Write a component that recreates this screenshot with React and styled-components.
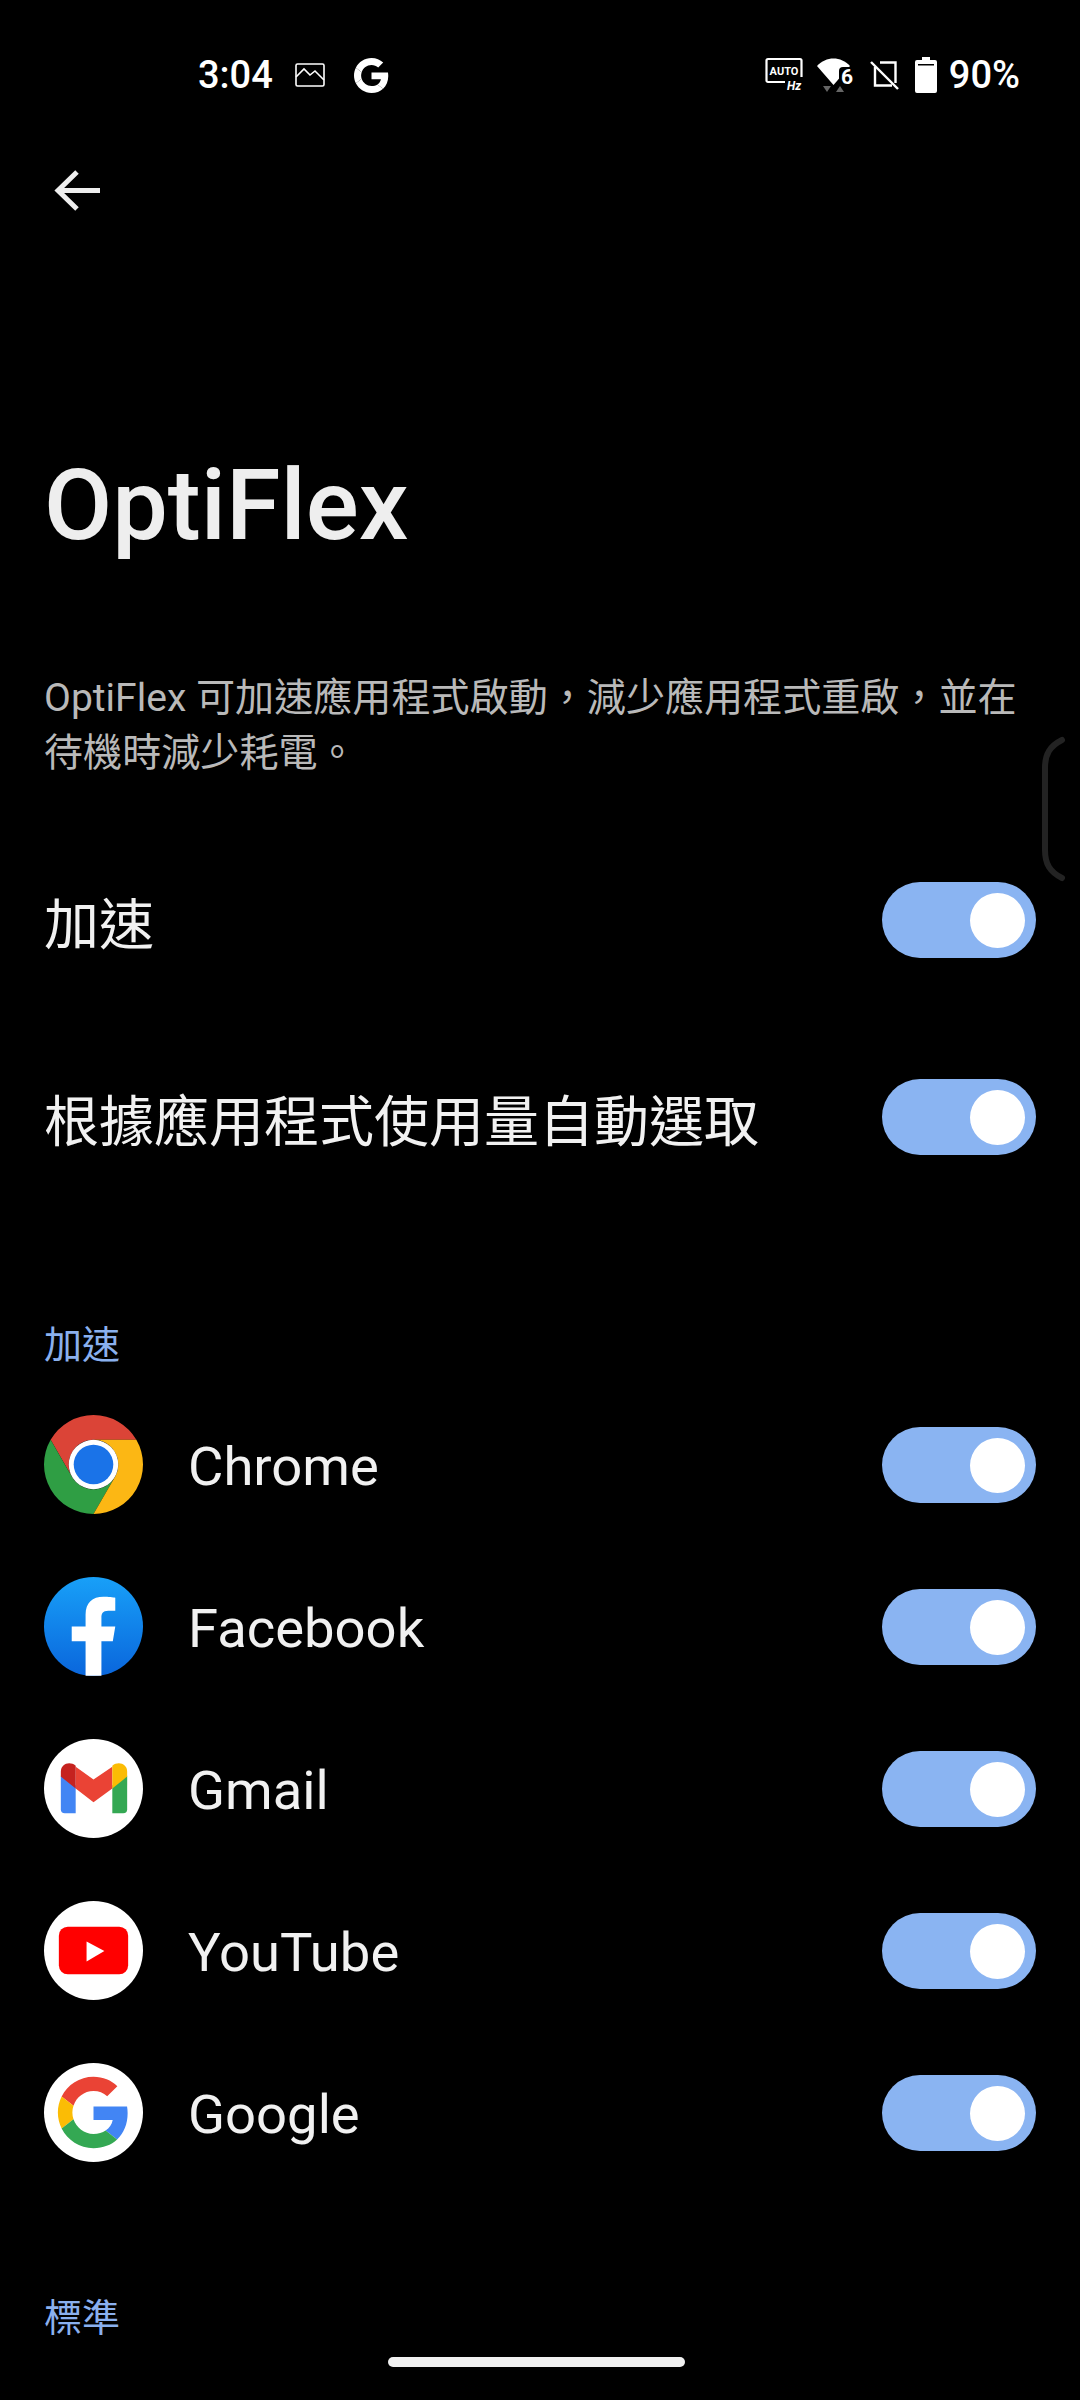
import React from "react";
import styled, { createGlobalStyle } from "styled-components";

const GlobalStyle = createGlobalStyle`
    html, body {
        margin: 0;
        padding: 0;
        background: #000;
    }
    body {
        font-family: Roboto, "Noto Sans CJK TC", sans-serif;
    }
`

const Screen = styled.div`
    position: relative;
    width: 1080px;
    height: 2400px;
    overflow: hidden;
    background: #000;
    color: #f1f1f1;
`

const StatusBar = styled.div`
    display: flex;
    align-items: center;
    justify-content: space-between;
    height: 150px;
    padding: 0 60px 0 198px;
    color: #fff;
`

const StatusGroup = styled.div`
    display: flex;
    align-items: center;
    gap: ${props => props.gap || 20}px;
`

const StatusText = styled.span`
    font-size: 38px;
    font-weight: 500;
    line-height: 1;
`

const Toolbar = styled.div`
    display: flex;
    align-items: center;
    height: 82px;
    padding-left: 54px;
`

const Title = styled.h1`
    margin: 218px 0 0;
    padding-left: 44px;
    font-size: 99px;
    font-weight: 500;
    line-height: 110px;
    color: #eee;
`

const Description = styled.p`
    margin: 111px 0 0;
    padding: 0 40px 0 44px;
    font-size: 39.1px;
    font-weight: 400;
    line-height: 55px;
    color: #b9b9b9;
`

const SettingRow = styled.div`
    display: flex;
    align-items: center;
    justify-content: space-between;
    height: 197px;
    padding: 0 44px;
    font-size: 55px;
    color: #f1f1f1;
`

const SettingList = styled.div`
    margin-top: 40px;
`

const SectionLabel = styled.div`
    margin-top: ${props => props.top}px;
    padding-left: 44px;
    font-size: 38px;
    line-height: 50px;
    color: #8ab0ee;
`

const AppList = styled.div`
    margin-top: 45px;
    display: flex;
    flex-direction: column;
    gap: 63px;
`

const AppRow = styled.div`
    display: flex;
    align-items: center;
    height: 99px;
    padding: 0 44px;
`

const AppIcon = styled.svg`
    width: 99px;
    height: 99px;
    flex: none;
`

const AppName = styled.div`
    flex: 1;
    margin-left: 45px;
    padding-top: 3px;
    font-size: 54.4px;
    color: #f1f1f1;
`

const Toggle = styled.div`
    position: relative;
    flex: none;
    width: 154px;
    height: 76px;
    border-radius: 38px;
    background: #8ab4f2;

    &::after {
        content: "";
        position: absolute;
        top: 11px;
        right: 11px;
        width: 55px;
        height: 55px;
        border-radius: 50%;
        background: #fff;
    }
`

const HomeBar = styled.div`
    position: absolute;
    left: 388px;
    top: 2357px;
    width: 297px;
    height: 10px;
    border-radius: 5px;
    background: #f1f1f1;
`

const EdgeHandle = styled.svg`
    position: absolute;
    left: 1036px;
    top: 732px;
    width: 44px;
    height: 154px;
`

const BackArrow = () => (
    <svg width="46" height="42" viewBox="0 0 46 42" fill="none" stroke="#eee" strokeWidth="5">
        <path d="M46 20.5H4M23 2 4 20.5 23 39" />
    </svg>
)

const PictureIcon = () => (
    <svg width="30" height="24" viewBox="0 0 30 24" fill="none" stroke="#fff" strokeWidth="1.6">
        <rect x="1" y="1" width="28" height="22" rx="1.5" />
        <path d="M1 14 9 6l6 6 5-4 9 9" />
    </svg>
)

const GooglePaths = ({ red, blue, yellow, green }) => (
    <>
        <path fill={red} d="M24 9.5c3.54 0 6.71 1.22 9.21 3.6l6.85-6.85C35.9 2.38 30.47 0 24 0 14.62 0 6.51 5.38 2.56 13.22l7.98 6.19C12.43 13.72 17.74 9.5 24 9.5z" />
        <path fill={blue} d="M46.98 24.55c0-1.57-.15-3.09-.38-4.55H24v9.02h12.94c-.58 2.96-2.26 5.48-4.78 7.18l7.73 6c4.51-4.18 7.09-10.36 7.09-17.65z" />
        <path fill={yellow} d="M10.53 28.59c-.48-1.45-.76-2.99-.76-4.59s.27-3.14.76-4.59l-7.98-6.19C.92 16.46 0 20.12 0 24c0 3.88.92 7.54 2.56 10.78l7.97-6.19z" />
        <path fill={green} d="M24 48c6.48 0 11.93-2.13 15.89-5.81l-7.73-6c-2.15 1.45-4.92 2.3-8.16 2.3-6.26 0-11.57-4.22-13.47-9.91l-7.98 6.19C6.51 42.62 14.62 48 24 48z" />
    </>
)

const StatusG = styled.svg`
    width: 35px;
    height: 35px;
    margin-left: 7px;
`

const AutoHzIcon = () => (
    <svg width="40" height="36" viewBox="0 0 40 36" fill="none">
        <path d="M20 25H3a1.500 1.500 0 0 1-1.500-1.500V3.500A1.500 1.500 0 0 1 3 2h32a1.500 1.500 0 0 1 1.500 1.500V20" stroke="#fff" strokeWidth="2.200" />
        <text x="19" y="18" textAnchor="middle" fill="#fff" fontSize="11" fontWeight="700" fontFamily="Roboto, sans-serif">AUTO</text>
        <text x="22" y="33" fill="#fff" fontSize="12" fontWeight="700" fontStyle="italic" fontFamily="Roboto, sans-serif">Hz</text>
    </svg>
)

const WifiIcon = () => (
    <svg width="41" height="36" viewBox="0 0 41 36">
        <path d="M0 9C9-1 24-1 33 9L16.500 28z" fill="#fff" />
        <rect x="22" y="10" width="16" height="20" rx="4" fill="#000" />
        <text x="30" y="27" textAnchor="middle" fill="#fff" fontSize="21" fontWeight="700" fontFamily="Roboto, sans-serif">6</text>
        <path d="M6 29h8l-4 6zM19 35h8l-4-6z" fill="#666" />
    </svg>
)

const NoSimIcon = () => (
    <svg width="33" height="30" viewBox="0 0 33 30" fill="none" stroke="#fff" strokeWidth="2.400">
        <path d="M5 7v18.500h17" />
        <path d="M10 2.500h15.500V23" />
        <path d="M1 2l27 27" />
    </svg>
)

const BatteryIcon = () => (
    <svg width="22" height="36" viewBox="0 0 22 36">
        <path d="M7 0h8v3h5a2 2 0 0 1 2 2v29a2 2 0 0 1-2 2H2a2 2 0 0 1-2-2V5a2 2 0 0 1 2-2h5z" fill="#fff" />
        <rect x="3" y="7" width="16" height="1.500" fill="#000" />
    </svg>
)

const ChromeIcon = () => (
    <AppIcon viewBox="0 0 100 100">
        <path fill="#db4437" d="M50 0A50 50 0 0 1 93.300 25H50A25 25 0 0 0 28.350 62.500L6.700 25A50 50 0 0 1 50 0z" />
        <path fill="#2f9e44" d="M6.700 25A50 50 0 0 0 50 100L71.650 62.500A25 25 0 0 1 28.350 62.500z" />
        <path fill="#fcb714" d="M93.300 25A50 50 0 0 1 50 100L71.650 62.500A25 25 0 0 0 50 25z" />
        <circle cx="50" cy="50" r="25" fill="#fff" />
        <circle cx="50" cy="50" r="20" fill="#1a73e8" />
    </AppIcon>
)

const FacebookIcon = () => (
    <AppIcon viewBox="0 0 100 100">
        <defs>
            <linearGradient id="fbBlue" x1="0" y1="0" x2="0" y2="1">
                <stop offset="0" stopColor="#18a0f8" />
                <stop offset="1" stopColor="#0a66dc" />
            </linearGradient>
        </defs>
        <circle cx="50" cy="50" r="50" fill="url(#fbBlue)" />
        <path fill="#fff" d="M42 99.700V65H28V50H42V38C42 26 49 20 60 20C65 20 70 20.500 72 21V34H65C59 34 58 37 58 41V50H72L69.500 65H58V99.700z" />
    </AppIcon>
)

const GmailIcon = () => (
    <AppIcon viewBox="0 0 100 100">
        <circle cx="50" cy="50" r="50" fill="#fff" />
        <path fill="#4285f4" d="M17 37V71a4 4 0 0 0 4 4H32V47z" />
        <path fill="#34a853" d="M84 37V71a4 4 0 0 1-4 4H69V47z" />
        <path fill="#ea4335" d="M32 28 50 41 69 28V50L50 64 32 50z" />
        <path fill="#c5221f" d="M17 33C17 25 26 22 32 27V50L17 38z" />
        <path fill="#fbbc04" d="M84 33C84 25 75 22 69 27V50L84 38z" />
    </AppIcon>
)

const YoutubeIcon = () => (
    <AppIcon viewBox="0 0 100 100">
        <circle cx="50" cy="50" r="50" fill="#fff" />
        <rect x="15" y="26" width="70" height="48" rx="9" fill="#f00" />
        <path fill="#fff" d="M43 41 61 50.500 43 61z" />
    </AppIcon>
)

const GoogleIcon = () => (
    <AppIcon viewBox="0 0 100 100">
        <circle cx="50" cy="50" r="50" fill="#fff" />
        <g transform="translate(14 14) scale(1.5)">
            <GooglePaths red="#ea4335" blue="#4285f4" yellow="#fbbc05" green="#34a853" />
        </g>
    </AppIcon>
)

const APPS = [
    { name: "Chrome", Icon: ChromeIcon },
    { name: "Facebook", Icon: FacebookIcon },
    { name: "Gmail", Icon: GmailIcon },
    { name: "YouTube", Icon: YoutubeIcon },
    { name: "Google", Icon: GoogleIcon },
]

const App = () => {
    return (
        <Screen>
            <GlobalStyle />
            <StatusBar>
                <StatusGroup gap={22}>
                    <StatusText>3:04</StatusText>
                    <PictureIcon />
                    <StatusG viewBox="0 0 48 48">
                        <GooglePaths red="#fff" blue="#fff" yellow="#fff" green="#fff" />
                    </StatusG>
                </StatusGroup>
                <StatusGroup gap={12}>
                    <AutoHzIcon />
                    <WifiIcon />
                    <NoSimIcon />
                    <BatteryIcon />
                    <StatusText>90%</StatusText>
                </StatusGroup>
            </StatusBar>
            <Toolbar>
                <BackArrow />
            </Toolbar>
            <Title>OptiFlex</Title>
            <Description>
                OptiFlex 可加速應用程式啟動，減少應用程式重啟，並在待機時減少耗電。
            </Description>
            <SettingList>
                <SettingRow>
                    加速
                    <Toggle />
                </SettingRow>
                <SettingRow>
                    根據應用程式使用量自動選取
                    <Toggle />
                </SettingRow>
            </SettingList>
            <SectionLabel top={105}>加速</SectionLabel>
            <AppList>
                {APPS.map(({ name, Icon }) => (
                    <AppRow key={name}>
                        <Icon />
                        <AppName>{name}</AppName>
                        <Toggle />
                    </AppRow>
                ))}
            </AppList>
            <SectionLabel top={131}>標準</SectionLabel>
            <HomeBar />
            <EdgeHandle viewBox="0 0 44 154" fill="none">
                <path d="M26 8C14 14 9 22 9 36V118C9 132 14 140 26 146" stroke="#232323" strokeWidth="6" strokeLinecap="round" />
            </EdgeHandle>
        </Screen>
    )
}

export default App
